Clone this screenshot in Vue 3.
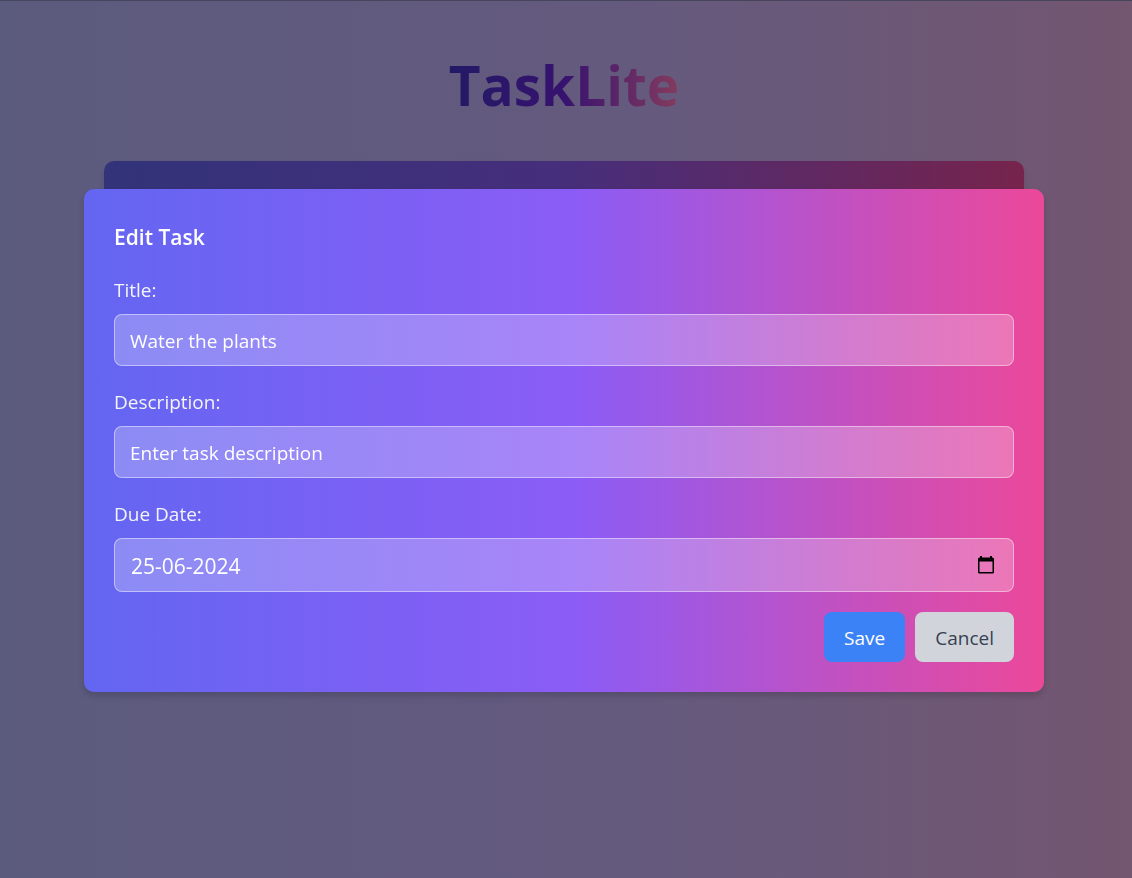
<script setup>
import { ref } from 'vue'

const title = ref('Water the plants')
const description = ref('')
const dueDate = ref('25-06-2024')
</script>

<template>
  <div class="page">
    <header class="header">
      <h1 class="brand">TaskLite</h1>
    </header>
    <main class="board"></main>

    <div class="overlay">
      <form class="dialog" role="dialog" aria-labelledby="dialog-title" @submit.prevent>
        <h2 id="dialog-title" class="dialog-title">Edit Task</h2>

        <label class="label" for="task-title">Title:</label>
        <input id="task-title" v-model="title" class="field" type="text" />

        <label class="label" for="task-description">Description:</label>
        <input
          id="task-description"
          v-model="description"
          class="field"
          type="text"
          placeholder="Enter task description"
        />

        <label class="label" for="task-date">Due Date:</label>
        <div class="field date-field">
          <input id="task-date" v-model="dueDate" class="date-input" type="text" />
          <button class="picker" type="button" aria-label="Open calendar">
            <svg viewBox="0 0 18 20" width="18" height="20" aria-hidden="true">
              <path
                fill="#000"
                fill-rule="evenodd"
                d="M3 1h2v1.500h8V1h2v1.500h.5A1.500 1.500 0 0 1 17 4v13a1.500 1.500 0 0 1-1.500 1.500h-13A1.500 1.500 0 0 1 1 17V4a1.500 1.500 0 0 1 1.500-1.500H3zM2.500 6.500V17h13V6.500z"
              />
            </svg>
          </button>
        </div>

        <div class="actions">
          <button class="button save" type="submit">Save</button>
          <button class="button cancel" type="button">Cancel</button>
        </div>
      </form>
    </div>
  </div>
</template>

<style>
body {
  margin: 0;
}
</style>

<style scoped>
.page {
  box-sizing: border-box;
  min-height: 100vh;
  padding: 40px 24px 40px 20px;
  border-top: 1px solid #46455c;
  background: linear-gradient(to right, #5b5b7e, #645a7e 55%, #735670);
  font-family: "Segoe UI", "Open Sans", "Noto Sans", sans-serif;
  font-size: 19px;
  line-height: 30px;
}

.header {
  display: flex;
  justify-content: center;
  margin-bottom: 32px;
}

.brand {
  margin: 0;
  font-size: 55px;
  line-height: 88px;
  font-weight: 700;
  color: transparent;
  background: linear-gradient(to right, #221a66, #37126f 50%, #843b5e);
  background-clip: text;
}

.board {
  max-width: 920px;
  min-height: 400px;
  margin: 0 auto;
  border-radius: 10px;
  background: linear-gradient(to right, #323379, #462e7b 50%, #76244c);
  box-shadow: 0 4px 6px rgba(0, 0, 0, 0.1);
}

.overlay {
  position: fixed;
  inset: 0;
  display: flex;
  align-items: center;
  justify-content: center;
  padding: 3px 4px 0 0;
}

.dialog {
  box-sizing: border-box;
  width: 100%;
  max-width: 960px;
  padding: 30px;
  border-radius: 10px;
  background: linear-gradient(to right, #6366f1, #8b5cf6 51%, #ec4899);
  box-shadow: 0 4px 6px rgba(0, 0, 0, 0.15);
}

.dialog-title {
  margin: 0 0 18px;
  font-size: 21px;
  line-height: 37px;
  font-weight: 600;
  color: #fff;
}

.label {
  display: block;
  margin-bottom: 8px;
  line-height: 32px;
  color: #f3f4f6;
}

.field {
  display: block;
  box-sizing: border-box;
  width: 100%;
  height: 52px;
  margin: 0 0 20px;
  padding: 11px 15px 9px;
  border: 1px solid rgba(255, 255, 255, 0.45);
  border-radius: 8px;
  outline: none;
  background: rgba(255, 255, 255, 0.25);
  color: #fff;
  font: inherit;
}

.field::placeholder {
  color: #fff;
  opacity: 1;
}

.date-field {
  display: flex;
  align-items: center;
  height: 54px;
  padding: 0 18px 0 16px;
}

.date-input {
  flex: 1;
  min-width: 0;
  padding: 2px 0 0;
  border: 0;
  outline: none;
  background: transparent;
  color: #fff;
  font: inherit;
  font-size: 21px;
}

.picker {
  display: flex;
  padding: 0;
  border: 0;
  background: transparent;
  cursor: pointer;
}

.actions {
  display: flex;
  justify-content: flex-end;
  gap: 10px;
}

.button {
  padding: 11px 20px 9px;
  border: 0;
  border-radius: 8px;
  font: inherit;
  cursor: pointer;
}

.save {
  background: #3b82f6;
  color: #fff;
}

.cancel {
  background: #d1d5db;
  color: #374151;
}
</style>
